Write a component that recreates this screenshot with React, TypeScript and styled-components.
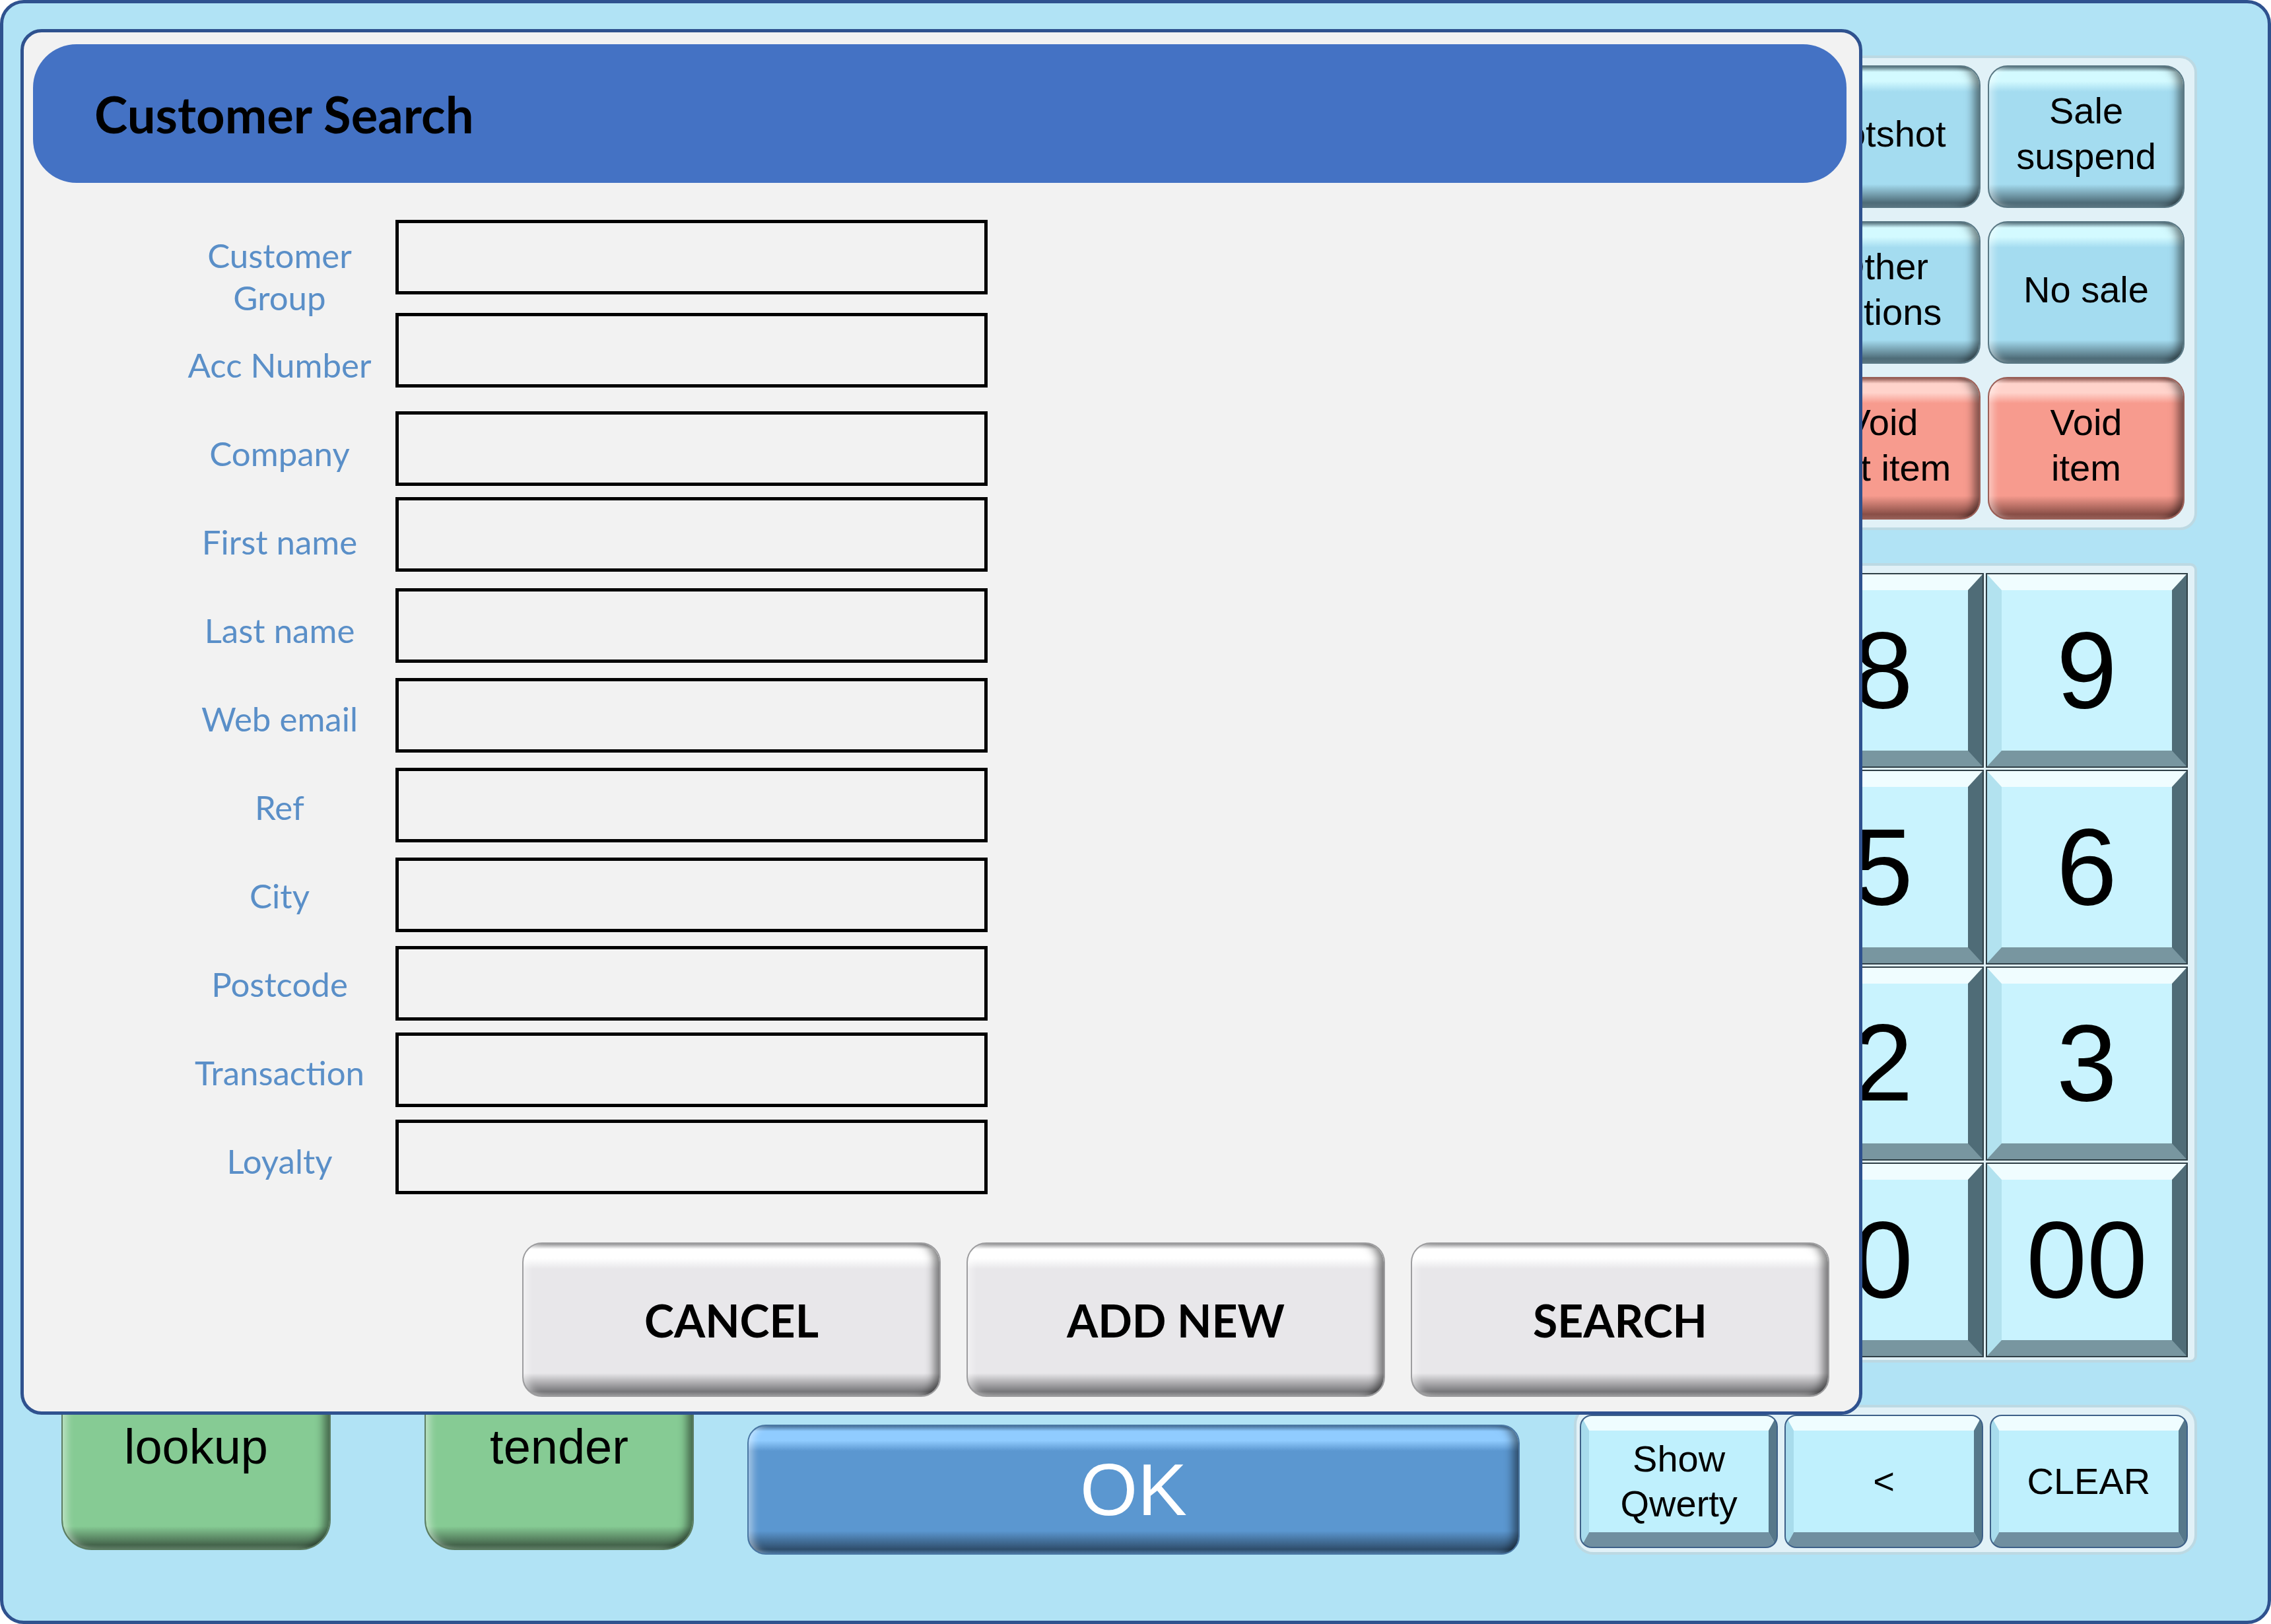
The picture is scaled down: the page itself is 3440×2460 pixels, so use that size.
import React from 'react';
import styled, { createGlobalStyle, css } from 'styled-components';

const GlobalStyle = createGlobalStyle`
  html, body {
    margin: 0;
    padding: 0;
  }
  body {
    background: #ffffff;
    font-family: "Liberation Sans", Arial, sans-serif;
  }
  * {
    box-sizing: border-box;
  }
`;

type Tone = 'blue' | 'red' | 'green' | 'ok' | 'grey';

const tones: Record<Tone, { base: string; light: string; dark: string; edge: string }> = {
  blue: { base: '#a4dcf0', light: '#d3faff', dark: '#4f6d79', edge: '#5a7884' },
  red: { base: '#f79b8e', light: '#ffd3cb', dark: '#8a4f47', edge: '#9a5f57' },
  green: { base: '#86cb94', light: '#b8f0c4', dark: '#45654c', edge: '#5c7d63' },
  ok: { base: '#5b97d0', light: '#90ccff', dark: '#2f4e6c', edge: '#4a77a3' },
  grey: { base: '#e8e7ea', light: '#ffffff', dark: '#77777a', edge: '#9d9d9f' },
};

const gloss = (tone: Tone) => {
  const t = tones[tone];
  return css`
    background: linear-gradient(
      180deg,
      ${t.edge} 0px,
      ${t.light} 8px,
      ${t.light} 22px,
      ${t.base} 38px,
      ${t.base} calc(100% - 34px),
      ${t.dark} calc(100% - 6px),
      ${t.edge} 100%
    );
    box-shadow: inset -16px 0 14px -8px rgba(0, 0, 0, 0.5),
      inset 14px 0 12px -8px rgba(255, 255, 255, 0.45);
    border: 2px solid ${t.edge};
  `;
};

const Screen = styled.div`
  position: relative;
  width: 3440px;
  height: 2460px;
  border: 5px solid #2f528f;
  border-radius: 36px;
  background: #b1e3f5;
  display: grid;
  grid-template-columns: 1fr 944px;
  column-gap: 82px;
  padding: 79px 107px 100px 88px;
  overflow: hidden;
`;

/* ---------- left side of the till ---------- */

const MainArea = styled.div`
  display: flex;
  flex-direction: column;
  justify-content: flex-end;
`;

const ActionRow = styled.div`
  display: flex;
  align-items: flex-end;
  gap: 81px;
`;

const GreenGroup = styled.div`
  display: flex;
  gap: 142px;
  margin-bottom: 7px;
`;

const GlossButton = styled.div<{ $tone: Tone; $radius?: number }>`
  ${p => gloss(p.$tone)};
  border-radius: ${p => p.$radius ?? 30}px;
  display: flex;
  align-items: center;
  justify-content: center;
  text-align: center;
  white-space: pre-line;
  color: #000;
  font-family: "Liberation Sans", Arial, sans-serif;
`;

const GreenButton = styled(GlossButton)`
  width: 408px;
  height: 398px;
  font-size: 74px;
  line-height: 85px;
  border-radius: 46px;
`;

const OkButton = styled(GlossButton)`
  flex: 1;
  height: 197px;
  color: #ffffff;
  font-size: 112px;
  line-height: 1;
`;

/* ---------- right side of the till ---------- */

const SideColumn = styled.div`
  display: flex;
  flex-direction: column;
  gap: 50px;
`;

const Panel = styled.div`
  background: #e1f1f7;
  border: 4px solid #bcd9e3;
  border-radius: 26px;
  display: grid;
  grid-template-columns: repeat(3, 1fr);
`;

const FunctionPanel = styled(Panel)`
  height: 719px;
  grid-template-rows: repeat(3, 1fr);
  gap: 20px 11px;
  padding: 11px 15px 12px 5px;
`;

const FunctionButton = styled(GlossButton)`
  font-size: 56px;
  line-height: 69px;
  padding-bottom: 10px;
`;

const NumPad = styled(Panel)`
  height: 1211px;
  grid-template-rows: repeat(4, 1fr);
  gap: 7px;
  padding: 13px 12px 6px 4px;
  border-radius: 10px;
`;

const KeyPanel = styled(Panel)`
  height: 227px;
  margin-top: auto;
  gap: 14px;
  padding: 13px 12px 8px 7px;
  border-radius: 30px;
`;

const BevelKey = styled.div`
  display: flex;
  align-items: center;
  justify-content: center;
  text-align: center;
  white-space: pre-line;
  color: #000;
  font-family: "Liberation Sans", Arial, sans-serif;
  border-style: solid;
`;

const NumKey = styled(BevelKey)`
  background: #c9f3fe;
  border-width: 24px 22px 24px 22px;
  border-color: #f0fdff #4f6c77 #7896a0 #b2e2ef;
  box-shadow: 0 0 0 2px #2f3f46;
  font-size: 165px;
  line-height: 1;
`;

const ControlKey = styled(BevelKey)`
  background: #bff0fd;
  border-width: 22px 12px 22px 12px;
  border-color: #effdff #56788a #708fa0 #a8dcec;
  border-radius: 16px;
  box-shadow: 0 0 0 2px #3d6088;
  font-size: 56px;
  line-height: 68px;
`;

/* ---------- customer search dialog ---------- */

const Dialog = styled.div`
  position: absolute;
  left: 26px;
  top: 39px;
  width: 2790px;
  height: 2099px;
  background: #f2f2f2;
  border: 5px solid #2f528f;
  border-radius: 32px;
  padding: 18px 19px 0 14px;
  display: flex;
  flex-direction: column;
`;

const DialogHeader = styled.div`
  height: 210px;
  background: #4472c4;
  border-radius: 66px;
  display: flex;
  align-items: center;
  padding-left: 93px;
`;

const DialogTitle = styled.h1`
  margin: 0;
  font-family: Lato, "Open Sans", sans-serif;
  font-weight: 700;
  font-size: 76px;
  color: #000;
`;

const FieldGrid = styled.div`
  margin: 56px 0 0 198px;
  display: grid;
  grid-template-columns: 351px 897px;
  align-items: start;
`;

const LabelColumn = styled.div`
  display: flex;
  flex-direction: column;
  padding-top: 19px;
`;

const FieldLabel = styled.label`
  height: 134px;
  display: flex;
  align-items: center;
  justify-content: center;
  text-align: center;
  white-space: pre-line;
  font-family: Lato, "Open Sans", sans-serif;
  font-size: 51px;
  line-height: 64px;
  color: #5a8fc8;
`;

const InputColumn = styled.div`
  display: flex;
  flex-direction: column;
`;

const FieldBox = styled.input<{ $space: number }>`
  display: block;
  width: 100%;
  height: 113px;
  margin-top: ${p => p.$space}px;
  border: 5px solid #000;
  border-radius: 0;
  background: transparent;
  outline: none;
  font-family: Lato, sans-serif;
  font-size: 50px;
  padding: 0 20px;
`;

const DialogActions = styled.div`
  margin-top: 56px;
  display: flex;
  justify-content: flex-end;
  gap: 39px;
  padding-right: 26px;
`;

const DialogButton = styled(GlossButton)`
  width: 634px;
  height: 234px;
  font-family: Lato, "Open Sans", sans-serif;
  font-weight: 700;
  font-size: 68px;
`;

const functionKeys: { label: string; tone: Tone }[] = [
  { label: 'Price\ncheck', tone: 'blue' },
  { label: 'Hotshot', tone: 'blue' },
  { label: 'Sale\nsuspend', tone: 'blue' },
  { label: 'Refund', tone: 'blue' },
  { label: 'Other\noptions', tone: 'blue' },
  { label: 'No sale', tone: 'blue' },
  { label: 'Void\nall', tone: 'red' },
  { label: 'Void\nlast item', tone: 'red' },
  { label: 'Void\nitem', tone: 'red' },
];

// bottom-left key is blank
const digits = ['7', '8', '9', '4', '5', '6', '1', '2', '3', '', '0', '00'];

// label text and the space above its box
const fields: { label: string; space: number }[] = [
  { label: 'Customer\nGroup', space: 0 },
  { label: 'Acc Number', space: 28 },
  { label: 'Company', space: 36 },
  { label: 'First name', space: 17 },
  { label: 'Last name', space: 25 },
  { label: 'Web email', space: 23 },
  { label: 'Ref', space: 23 },
  { label: 'City', space: 23 },
  { label: 'Postcode', space: 21 },
  { label: 'Transaction', space: 18 },
  { label: 'Loyalty', space: 19 },
];

function App() {
  return (
    <>
      <GlobalStyle />
      <Screen>
        <MainArea>
          <ActionRow>
            <GreenGroup>
              <GreenButton $tone="green">{'Customer\nlookup'}</GreenButton>
              <GreenButton $tone="green">{'Multi\ntender'}</GreenButton>
            </GreenGroup>
            <OkButton $tone="ok" $radius={28}>OK</OkButton>
          </ActionRow>
        </MainArea>

        <SideColumn>
          <FunctionPanel>
            {functionKeys.map(k => (
              <FunctionButton key={k.label} $tone={k.tone}>
                {k.label}
              </FunctionButton>
            ))}
          </FunctionPanel>
          <NumPad>
            {digits.map((d, i) => (
              <NumKey key={i}>{d}</NumKey>
            ))}
          </NumPad>
          <KeyPanel>
            <ControlKey>{'Show\nQwerty'}</ControlKey>
            <ControlKey>&lt;</ControlKey>
            <ControlKey>CLEAR</ControlKey>
          </KeyPanel>
        </SideColumn>

        <Dialog>
          <DialogHeader>
            <DialogTitle>Customer Search</DialogTitle>
          </DialogHeader>
          <FieldGrid>
            <LabelColumn>
              {fields.map(f => (
                <FieldLabel key={f.label}>{f.label}</FieldLabel>
              ))}
            </LabelColumn>
            <InputColumn>
              {fields.map(f => (
                <FieldBox
                  key={f.label}
                  $space={f.space}
                  aria-label={f.label.replace('\n', ' ')}
                />
              ))}
            </InputColumn>
          </FieldGrid>
          <DialogActions>
            <DialogButton $tone="grey" $radius={30}>CANCEL</DialogButton>
            <DialogButton $tone="grey" $radius={30}>ADD NEW</DialogButton>
            <DialogButton $tone="grey" $radius={30}>SEARCH</DialogButton>
          </DialogActions>
        </Dialog>
      </Screen>
    </>
  );
}

export default App;
